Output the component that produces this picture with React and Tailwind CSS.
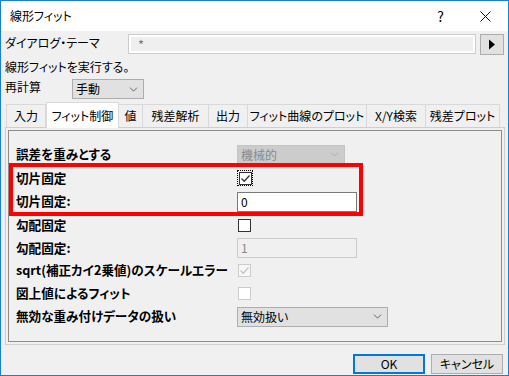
import { ChevronDown } from 'lucide-react';

const font = "font-['Meiryo_UI','Noto_Sans_CJK_JP',sans-serif] [font-feature-settings:'palt']";

const tabs = [
  { label: '入力', w: 'w-[40px]' },
  { label: 'フィット制御', w: 'w-[73px]', active: true },
  { label: '値', w: 'w-[24px]' },
  { label: '残差解析', w: 'w-[66px]' },
  { label: '出力', w: 'w-[39px]' },
  { label: 'フィット曲線のプロット', w: 'w-[119px]' },
  { label: 'X/Y検索', w: 'w-[59px]' },
  { label: '残差プロット', w: 'w-[74px]' },
];

const Check = ({ checked, disabled, focus, white }) => (
  <div className={`flex items-center justify-center ${focus ? 'w-[16px] h-[16px] border border-dotted border-black' : 'w-[13px] h-[13px]'}`}>
    <div
      className={`w-[13px] h-[13px] border flex items-center justify-center ${
        disabled ? 'border-[#cccccc] bg-[#f7f7f7]' : white ? 'border-[#cccccc] bg-white' : 'border-[#333333] bg-white'
      }`}
    >
      {checked && (
        <svg width="11" height="11" viewBox="0 0 11 11">
          <path d="M1.5 5.5 L4.2 8.2 L9.5 2.5" fill="none" stroke={disabled ? '#c4c4c4' : '#333333'} strokeWidth="1.3" />
        </svg>
      )}
    </div>
  </div>
);

const Row = ({ h, label, children }) => (
  <div className={`flex items-center ${h}`}>
    <div className="w-[221px] font-bold text-[12.6px] text-black">{label}</div>
    <div className="flex items-center">{children}</div>
  </div>
);

export default function App() {
  return (
    <div className={`w-[509px] h-[376px] border border-[#1a7ed6] bg-[#f0f0f0] flex flex-col text-[12px] text-black ${font}`}>
      {/* Title bar */}
      <div className="h-[30px] bg-white flex items-center pl-[9px] shrink-0">
        <span className="text-[12px] leading-none">線形フィット</span>
        <span className="ml-auto text-[14px] leading-none mr-[36px]">?</span>
        <svg width="11" height="11" viewBox="0 0 11 11" className="mr-[17px]">
          <path d="M0.5 0.5 L10.5 10.5 M10.5 0.5 L0.5 10.5" stroke="#111" strokeWidth="1" />
        </svg>
      </div>

      {/* Theme row */}
      <div className="flex items-start mt-[3px] h-[21px] pl-[4px]">
        <div className="w-[123px] pt-[1px] leading-[16px]">ダイアログ・テーマ</div>
        <div className="w-[348px] h-[20px] border border-[#cccccc] bg-white p-[2px]">
          <div className="h-full bg-[#efefef] flex items-center pl-[7px] text-[#777] text-[13px] leading-none">*</div>
        </div>
        <div className="ml-[4px] w-[24px] h-[21px] border border-[#adadad] bg-[#e1e1e1] flex items-center justify-center">
          <svg width="8" height="11" viewBox="0 0 8 11">
            <path d="M1 0.5 L7 5.5 L1 10.5 Z" fill="#000" />
          </svg>
        </div>
      </div>

      <div className="pl-[4px] mt-[2px] h-[20px] flex items-center">線形フィットを実行する。</div>

      {/* Recalc */}
      <div className="flex items-start mt-[2px] h-[20px] pl-[4px]">
        <div className="w-[67px] leading-[16px]">再計算</div>
        <div className="w-[72px] h-[20px] border border-[#adadad] bg-[#e1e1e1] flex items-center pl-[3px] pr-[3px]">
          <span>手動</span>
          <ChevronDown size={13} strokeWidth={1.3} className="ml-auto text-[#333]" />
        </div>
      </div>

      {/* Tabs */}
      <div className="flex items-end mt-[3px] h-[25px] pl-[5px] shrink-0">
        {tabs.map((t) =>
          t.active ? (
            <div
              key={t.label}
              className={`${t.w} h-[26px] -mb-[1px] bg-white border border-b-0 border-[#d9d9d9] flex items-center justify-center z-10`}
            >
              {t.label}
            </div>
          ) : (
            <div
              key={t.label}
              className={`${t.w} h-[23px] bg-[#f0f0f0] border border-l-0 first:border-l border-b-0 border-[#d9d9d9] flex items-center justify-center`}
            >
              {t.label}
            </div>
          )
        )}
      </div>

      {/* Panel */}
      <div className="relative ml-[4px] w-[500px] h-[218px] border border-[#cfcfcf] p-[2px] shrink-0">
        <div className="h-full border border-[#8c8c8c] pl-[7px] pt-[12px]">
          <Row h="h-[23px]" label="誤差を重みとする">
            <div className="w-[108px] h-[20px] border border-[#c4c4c4] bg-[#cccccc] flex items-center pl-[3px] pr-[3px] text-[#8a8a8a]">
              <span>機械的</span>
              <ChevronDown size={13} strokeWidth={1.2} className="ml-auto text-[#a0a0a0]" />
            </div>
          </Row>
          <Row h="h-[24px]" label="切片固定">
            <Check checked focus />
          </Row>
          <Row h="h-[23px]" label="切片固定:">
            <div className="w-[120px] h-[20px] border border-[#7a7a7a] bg-white flex items-center pl-[3px]">0</div>
          </Row>
          <Row h="h-[24px]" label="勾配固定">
            <div className="pl-[1px]">
              <Check />
            </div>
          </Row>
          <Row h="h-[22px]" label="勾配固定:">
            <div className="w-[120px] h-[20px] border border-[#cccccc] bg-[#f0f0f0] flex items-center pl-[3px] text-[#8a8a8a]">1</div>
          </Row>
          <Row h="h-[23px]" label="sqrt(補正カイ2乗値)のスケールエラー">
            <div className="pl-[1px]">
              <Check checked disabled />
            </div>
          </Row>
          <Row h="h-[23px]" label="図上値によるフィット">
            <div className="pl-[1px]">
              <Check white />
            </div>
          </Row>
          <Row h="h-[23px]" label="無効な重み付けデータの扱い">
            <div className="w-[151px] h-[20px] border border-[#adadad] bg-[#e1e1e1] flex items-center pl-[3px] pr-[3px]">
              <span>無効扱い</span>
              <ChevronDown size={13} strokeWidth={1.3} className="ml-auto text-[#333]" />
            </div>
          </Row>
        </div>
        {/* highlight annotation */}
        <div className="absolute left-[3px] top-[35px] w-[354px] h-[53px] border-4 border-[#ff0000]" />
      </div>

      {/* Buttons */}
      <div className="flex justify-end gap-[6px] mt-[9px] pr-[5px]">
        <div className="w-[72px] h-[20px] border-2 border-[#0078d7] bg-[#e1e1e1] flex items-center justify-center">OK</div>
        <div className="w-[72px] h-[20px] border border-[#adadad] bg-[#e1e1e1] flex items-center justify-center">キャンセル</div>
      </div>
    </div>
  );
}
